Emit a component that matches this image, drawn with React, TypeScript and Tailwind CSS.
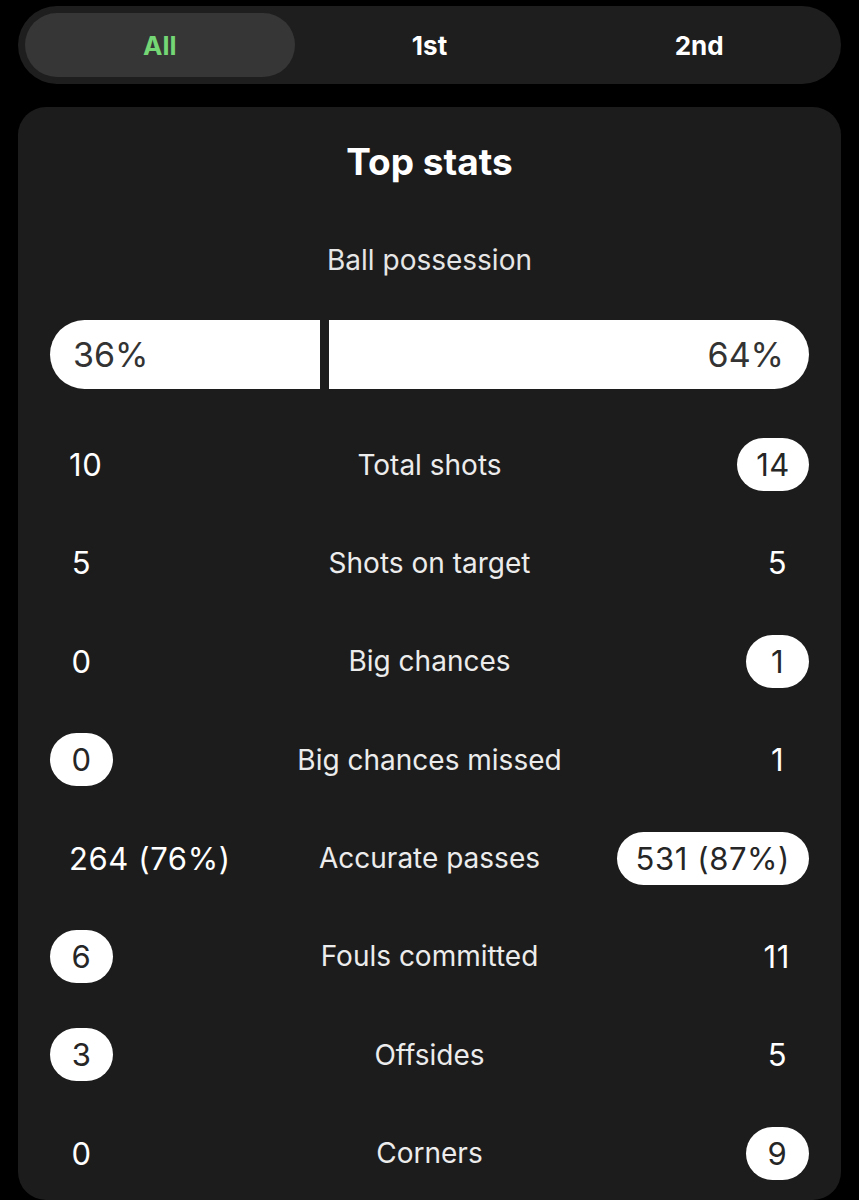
import React from "react";

type Row = { label: string; home: string; away: string; hl: "home" | "away" | "none" };

const rows: Row[] = [
  { label: "Total shots", home: "10", away: "14", hl: "away" },
  { label: "Shots on target", home: "5", away: "5", hl: "none" },
  { label: "Big chances", home: "0", away: "1", hl: "away" },
  { label: "Big chances missed", home: "0", away: "1", hl: "home" },
  { label: "Accurate passes", home: "264 (76%)", away: "531 (87%)", hl: "away" },
  { label: "Fouls committed", home: "6", away: "11", hl: "home" },
  { label: "Offsides", home: "3", away: "5", hl: "home" },
  { label: "Corners", home: "0", away: "9", hl: "away" },
];

function Value({ text, highlight }: { text: string; highlight: boolean }) {
  return (
    <div
      className={
        highlight
          ? "h-[53px] min-w-[63px] px-[19px] rounded-full bg-white text-[#262626] flex items-center justify-center text-[31px] tracking-[0.6px] leading-none whitespace-nowrap"
          : "h-[53px] min-w-[63px] px-[19px] rounded-full text-white flex items-center justify-center text-[31px] tracking-[0.6px] leading-none whitespace-nowrap"
      }
    >
      {text}
    </div>
  );
}

export default function App() {
  return (
    <div
      className="min-h-[1200px] w-[859px] bg-black pt-[6px] px-[18px] overflow-hidden"
      style={{ fontFamily: "Inter, 'Noto Sans', sans-serif" }}
    >
      <div className="h-[78px] rounded-full bg-[#1e1e1e] p-[7px] flex">
        <div className="flex-1 rounded-full bg-[#363636] flex items-center justify-center text-[26px] font-bold text-[#74d674]">
          All
        </div>
        <div className="flex-1 flex items-center justify-center text-[26px] font-bold text-white">
          1st
        </div>
        <div className="flex-1 flex items-center justify-center text-[26px] font-bold text-white">
          2nd
        </div>
      </div>

      <div className="mt-[23px] rounded-[28px] bg-[#1c1c1c] pt-[33px] pb-[20px] px-[32px]">
        <div className="h-[44px] flex items-center justify-center text-[37px] font-bold text-white">
          Top stats
        </div>
        <div className="mt-[59px] h-[34px] flex items-center justify-center text-[28px] text-[#e6e6e6]">
          Ball possession
        </div>
        <div className="mt-[43px] h-[69px] grid grid-cols-[36fr_64fr] gap-[9px]">
          <div className="bg-white rounded-l-full flex items-center pl-[23px] text-[34px] text-[#333333]">
            36%
          </div>
          <div className="bg-white rounded-r-full flex items-center justify-end pr-[25px] text-[34px] text-[#333333]">
            64%
          </div>
        </div>
        <div className="mt-[49px] flex flex-col gap-[45.4px]">
          {rows.map((r) => (
            <div key={r.label} className="relative h-[53px] flex items-center justify-between">
              <Value text={r.home} highlight={r.hl === "home"} />
              <div className="absolute inset-0 flex items-center justify-center text-[28px] text-[#ececec] pointer-events-none">
                {r.label}
              </div>
              <Value text={r.away} highlight={r.hl === "away"} />
            </div>
          ))}
        </div>
      </div>
    </div>
  );
}
